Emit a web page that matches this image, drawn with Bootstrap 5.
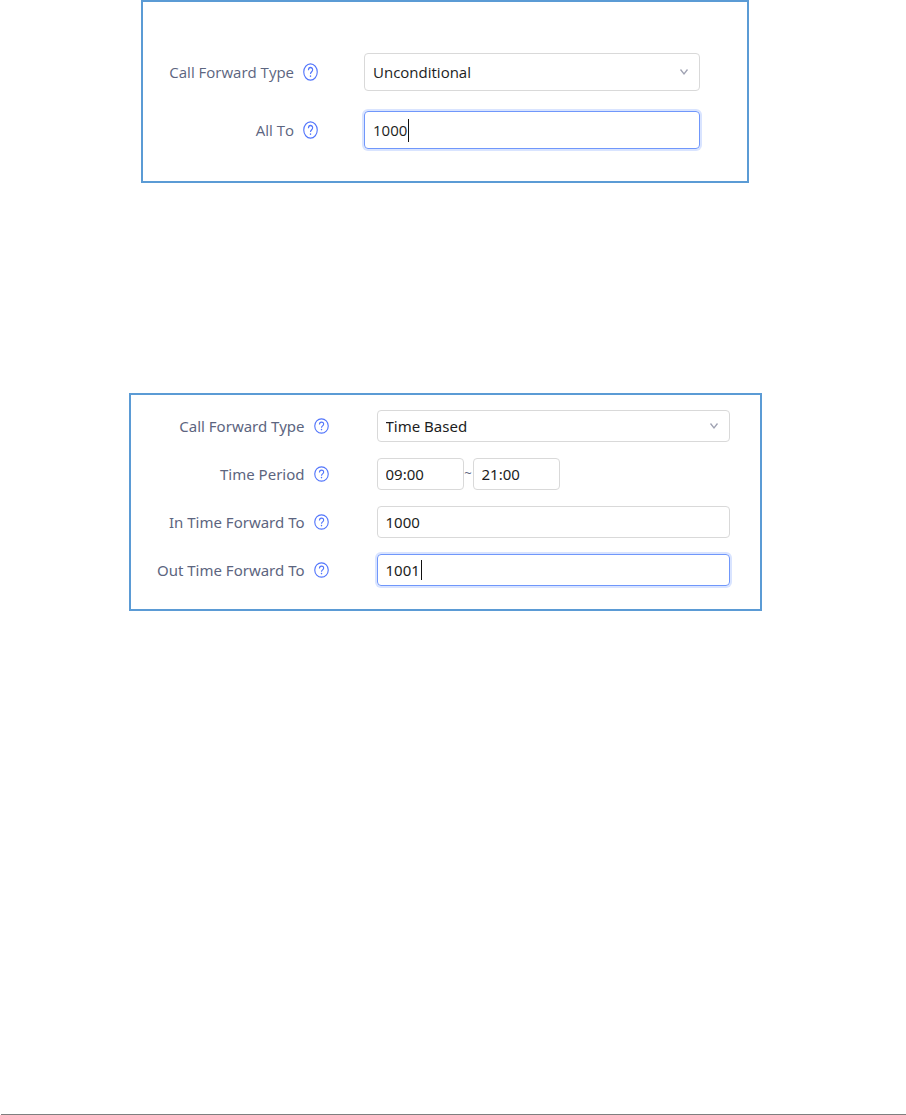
<!DOCTYPE html>
<html lang="en">
<head>
<meta charset="utf-8">
<meta name="viewport" content="width=device-width, initial-scale=1">
<title>Call Forward</title>
<link href="https://cdn.jsdelivr.net/npm/bootstrap@5.3.0/dist/css/bootstrap.min.css" rel="stylesheet">
<style>
  body { font-family: "Noto Sans", "Open Sans", sans-serif; color: #1c1d22; background: #fff; }
  main { padding-right: 16px; gap: 210px; }
  .panel { border: 2px solid #5b9bd5; --label: 174px; --side: 30px; --field: 32px; font-size: 15px; max-width: 633px; gap: 16px; padding: 15px 0 23px; }
  .panel-tall { --label: 151px; --side: 47px; --field: 38px; font-family: "Open Sans", sans-serif; max-width: 608px; gap: 20px; padding: 51px 0 32px; }
  .field-row { padding-right: var(--side); }
  .field-label { width: var(--label); color: #5c6580; text-align: right; white-space: nowrap; }
  .help { width: 15px; height: 16px; margin: 0 48px 0 9px; color: #5275fb; line-height: 0; }
  .panel-tall .help { height: 18px; margin-right: 46px; }
  .help svg { width: 100%; height: 100%; }
  .panel .form-control, .panel .form-select { height: var(--field); padding: 0 8px; border: 1px solid #d9d9d9; border-radius: 4px; font-size: inherit; color: inherit; background-color: #fff; box-shadow: none; }
  .panel .form-select { background-image: url("data:image/svg+xml,%3Csvg xmlns='http://www.w3.org/2000/svg' viewBox='0 0 10 8'%3E%3Cpath d='M1.500 1.500 5 6l3.500-4.500' fill='none' stroke='%23a0a3b3' stroke-width='1.300'/%3E%3C/svg%3E"); background-size: 10px 8px; background-position: right 10px center; }
  .panel .active-field { border-color: #7097fb; box-shadow: 0 0 0 2px #d9e4ff; background: linear-gradient(#111, #111) no-repeat 43px center / 1px 20px; }
  .panel-tall .active-field { background-size: 1px 23px; }
  .panel .time-field { width: 87px; }
  .tilde { width: 9px; font-size: 13px; color: #5c6580; text-align: center; }
  .page-rule { height: 1px; margin-left: 1px; background: #7f7f7f; }
</style>
</head>
<body class="min-vh-100 d-flex flex-column">
<svg class="d-none" xmlns="http://www.w3.org/2000/svg">
  <symbol id="question" viewBox="0 0 16 16" preserveAspectRatio="none">
    <circle cx="8" cy="8" r="7.2" fill="none" stroke="currentColor" stroke-width="1.2"/>
    <path d="M5.800 6.400C5.800 3.200 10.300 3.400 10.300 6.100 10.300 7.900 8 7.900 8 9.700" fill="none" stroke="currentColor" stroke-width="1.200"/>
    <circle cx="8" cy="11.600" r=".8" fill="currentColor"/>
  </symbol>
</svg>
<main class="d-flex flex-column align-items-center flex-grow-1">
  <form class="panel panel-tall w-100 d-flex flex-column">
    <div class="field-row d-flex align-items-center">
      <label class="field-label flex-shrink-0" for="type1">Call Forward Type</label>
      <span class="help flex-shrink-0"><svg aria-hidden="true"><use href="#question"/></svg></span>
      <select class="form-select" id="type1"><option>Unconditional</option></select>
    </div>
    <div class="field-row d-flex align-items-center">
      <label class="field-label flex-shrink-0" for="all">All To</label>
      <span class="help flex-shrink-0"><svg aria-hidden="true"><use href="#question"/></svg></span>
      <input class="form-control active-field" id="all" type="text" value="1000">
    </div>
  </form>
  <form class="panel w-100 d-flex flex-column">
    <div class="field-row d-flex align-items-center">
      <label class="field-label flex-shrink-0" for="type2">Call Forward Type</label>
      <span class="help flex-shrink-0"><svg aria-hidden="true"><use href="#question"/></svg></span>
      <select class="form-select" id="type2"><option>Time Based</option></select>
    </div>
    <div class="field-row d-flex align-items-center">
      <label class="field-label flex-shrink-0" for="start">Time Period</label>
      <span class="help flex-shrink-0"><svg aria-hidden="true"><use href="#question"/></svg></span>
      <input class="form-control time-field" id="start" type="text" value="09:00">
      <span class="tilde">~</span>
      <input class="form-control time-field" id="end" type="text" value="21:00" aria-label="Time period end">
    </div>
    <div class="field-row d-flex align-items-center">
      <label class="field-label flex-shrink-0" for="in">In Time Forward To</label>
      <span class="help flex-shrink-0"><svg aria-hidden="true"><use href="#question"/></svg></span>
      <input class="form-control" id="in" type="text" value="1000">
    </div>
    <div class="field-row d-flex align-items-center">
      <label class="field-label flex-shrink-0" for="out">Out Time Forward To</label>
      <span class="help flex-shrink-0"><svg aria-hidden="true"><use href="#question"/></svg></span>
      <input class="form-control active-field" id="out" type="text" value="1001">
    </div>
  </form>
</main>
<div class="page-rule"></div>
<script src="https://cdn.jsdelivr.net/npm/bootstrap@5.3.0/dist/js/bootstrap.bundle.min.js"></script>
</body>
</html>
